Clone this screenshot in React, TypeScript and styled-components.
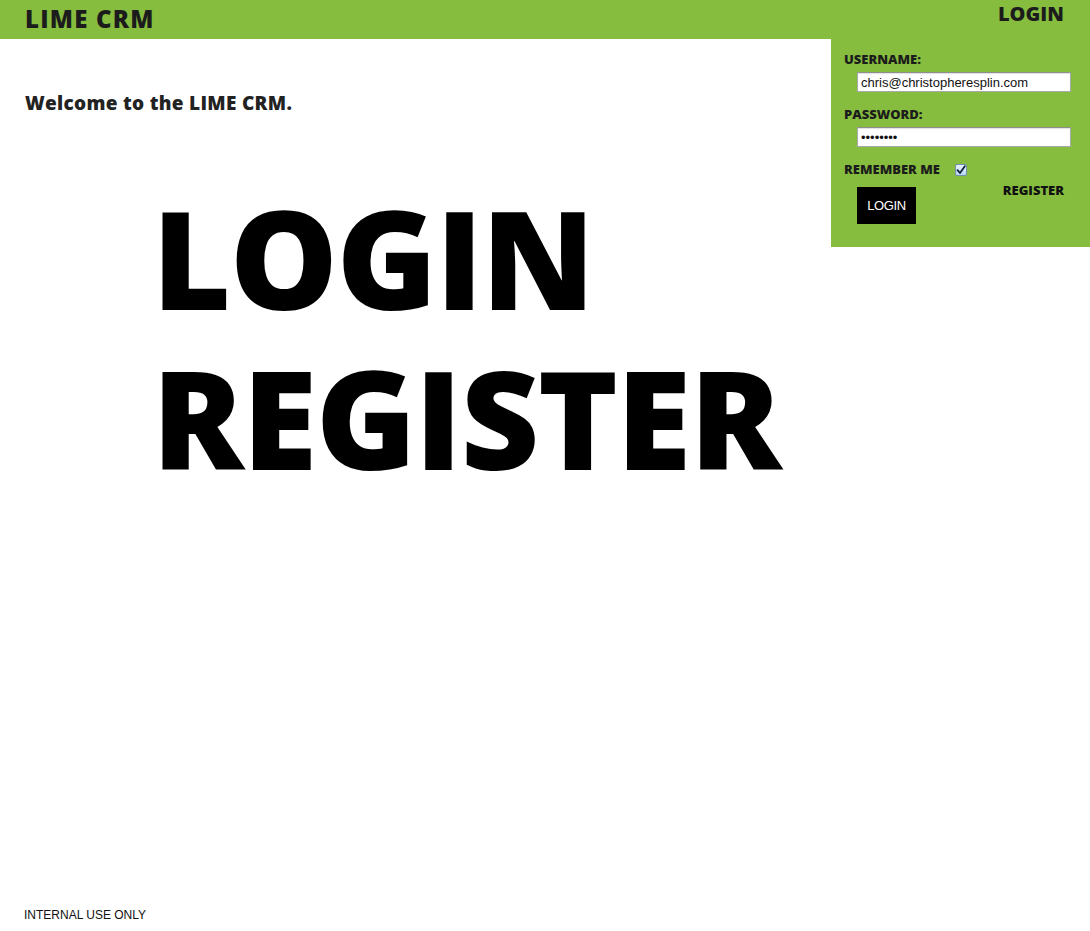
import React from "react";
import styled, { createGlobalStyle } from "styled-components";

const GlobalStyle = createGlobalStyle`
  html, body {
    margin: 0;
    padding: 0;
    background: #ffffff;
  }
  body {
    font-family: "Liberation Sans", Arial, sans-serif;
    color: #222222;
  }
  * { box-sizing: border-box; }
`;

const LIME = "#86bd3e";
const HEAVY = `"Open Sans", "Liberation Sans", Arial, sans-serif`;

const Page = styled.div`
  min-height: 100vh;
  display: flex;
  flex-direction: column;
`;

const Header = styled.header`
  height: 39px;
  background: ${LIME};
  display: flex;
  justify-content: space-between;
  align-items: flex-start;
  padding: 0 26px 0 25px;
`;

const Brand = styled.div`
  margin-top: 4px;
  font-family: ${HEAVY};
  font-size: 24px;
  line-height: 30px;
  font-weight: 800;
  letter-spacing: 1.2px;
  color: #1c1c1c;
`;

const NavLink = styled.a`
  margin-top: 1px;
  font-family: ${HEAVY};
  font-size: 20px;
  line-height: 26px;
  font-weight: 800;
  color: #1c1c1c;
  text-decoration: none;
`;

const Body = styled.div`
  flex: 1;
  display: flex;
  align-items: flex-start;
`;

const Main = styled.main`
  flex: 1;
  padding: 53px 25px 0 25px;
`;

const Welcome = styled.h1`
  margin: 0;
  font-family: ${HEAVY};
  font-size: 19px;
  line-height: 23px;
  font-weight: 800;
  letter-spacing: 0.3px;
  color: #222222;
`;

const BigLinks = styled.nav`
  margin-top: 63px;
  padding-left: 127px;
  display: flex;
  flex-direction: column;
  align-items: flex-start;
`;

const BigLink = styled.a`
  font-family: ${HEAVY};
  font-size: 136px;
  line-height: 160px;
  font-weight: 800;
  letter-spacing: -1.5px;
  color: #000000;
  text-decoration: none;
`;

const Panel = styled.aside`
  width: 259px;
  background: ${LIME};
  padding: 12px 19px 23px 13px;
  display: flex;
  flex-direction: column;
`;

const Label = styled.label`
  display: block;
  font-family: ${HEAVY};
  font-size: 13px;
  line-height: 17px;
  font-weight: 800;
  color: #1c1c1c;
`;

const TextInput = styled.input`
  display: block;
  margin: 4px 0 14px 13px;
  width: 214px;
  height: 20px;
  padding: 1px 3px;
  border: 1px solid #a9a9a9;
  border-top-color: #8e8e8e;
  box-shadow: inset 0 1px 1px rgba(0, 0, 0, 0.12);
  background: #ffffff;
  font-family: "Liberation Sans", Arial, sans-serif;
  font-size: 13px;
  color: #111111;
  outline: none;
`;

const RememberRow = styled.div`
  display: flex;
  align-items: flex-start;
  gap: 15px;
`;

const CheckBox = styled.span`
  width: 12px;
  height: 12px;
  margin-top: 3px;
  border: 1px solid #6f8fb3;
  border-radius: 2px;
  background: linear-gradient(#e9f3fc, #b9d6f2);
  display: flex;
  align-items: center;
  justify-content: center;
`;

const ActionRow = styled.div`
  margin-top: 9px;
  display: flex;
  justify-content: space-between;
  align-items: flex-start;
  padding-left: 13px;
  padding-right: 7px;
`;

const LoginButton = styled.button`
  width: 59px;
  height: 37px;
  background: #000000;
  border: none;
  color: #ffffff;
  font-family: "Liberation Sans", Arial, sans-serif;
  font-size: 13px;
  letter-spacing: -0.4px;
  padding: 0;
  cursor: pointer;
`;

const RegisterLink = styled.a`
  margin-top: -5px;
  font-family: ${HEAVY};
  font-size: 13px;
  line-height: 17px;
  font-weight: 800;
  color: #111111;
  text-decoration: none;
`;

const Footer = styled.footer`
  padding: 0 24px 9px 24px;
  font-size: 12px;
  line-height: 14px;
  color: #111111;
`;

export default function App() {
  return (
    <Page>
      <GlobalStyle />
      <Header>
        <Brand>LIME CRM</Brand>
        <NavLink href="#">LOGIN</NavLink>
      </Header>
      <Body>
        <Main>
          <Welcome>Welcome to the LIME CRM.</Welcome>
          <BigLinks>
            <BigLink href="#">LOGIN</BigLink>
            <BigLink href="#">REGISTER</BigLink>
          </BigLinks>
        </Main>
        <Panel>
          <Label htmlFor="username">USERNAME:</Label>
          <TextInput id="username" type="text" defaultValue="chris@christopheresplin.com" />
          <Label htmlFor="password">PASSWORD:</Label>
          <TextInput id="password" type="password" defaultValue="password" />
          <RememberRow>
            <Label>REMEMBER ME</Label>
            <CheckBox role="checkbox" aria-checked="true">
              <svg width="10" height="10" viewBox="0 0 10 10">
                <path d="M1.5 5.2 L4 8 L8.8 1.2" fill="none" stroke="#0d2038" strokeWidth="1.8" strokeLinecap="round" strokeLinejoin="round" />
              </svg>
            </CheckBox>
          </RememberRow>
          <ActionRow>
            <LoginButton type="button">LOGIN</LoginButton>
            <RegisterLink href="#">REGISTER</RegisterLink>
          </ActionRow>
        </Panel>
      </Body>
      <Footer>INTERNAL USE ONLY</Footer>
    </Page>
  );
}
